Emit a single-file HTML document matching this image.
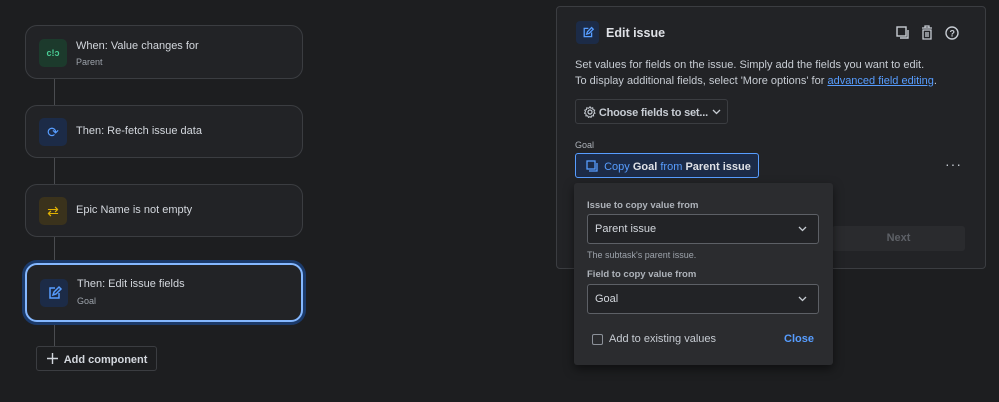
<!DOCTYPE html>
<html><head><style>
*{box-sizing:border-box;margin:0;padding:0}
body{width:999px;height:402px;background:#1d1e20;font-family:"Liberation Sans",sans-serif;color:#c7ccd3;position:relative;overflow:hidden;font-size:11px}
.a{position:absolute}
.card{position:absolute;left:25px;width:278px;background:#222326;border:1px solid #3b3d41;border-radius:12px}
.ic{position:absolute;left:13px;width:28px;height:28px;border-radius:5px}
.t{position:absolute;left:50px;font-size:11px;color:#d3d7dd}
.s{position:absolute;left:50px;font-size:9px;color:#9da3ab}
.line{position:absolute;left:54px;width:1px;background:#4a4c50}
.sel{position:absolute;left:13px;width:232px;height:30px;border:1px solid #5d6066;border-radius:3px;background:#222326;font-size:11px;color:#d3d7dd;padding:8px 7px}
.sel svg{position:absolute;right:11px;top:11px}
.lab{position:absolute;left:13px;font-size:9.5px;color:#aeb3ba;font-weight:bold}
</style></head><body>
<div class="line" style="top:79px;height:290px"></div>
<div class="card" style="top:25px;height:54px"><div class="ic" style="top:13px;background:#1c3a2c;color:#4bce97;font-size:9px;font-weight:bold;text-align:center;line-height:28px">c!ↄ</div><div class="t" style="top:14px">When: Value changes for</div><div class="s" style="top:31px">Parent</div></div>
<div class="card" style="top:105px;height:53px"><div class="ic" style="top:12px;background:#1c2b47;color:#579dff;font-size:14px;text-align:center;line-height:28px">⟳</div><div class="t" style="top:19px">Then: Re-fetch issue data</div></div>
<div class="card" style="top:184px;height:53px"><div class="ic" style="top:12px;background:#3a321c;color:#e2b203;font-size:14px;text-align:center;line-height:28px">⇄</div><div class="t" style="top:19px">Epic Name is not empty</div></div>
<div class="card" style="top:263px;height:59px;border:2px solid #85b8ff;box-shadow:0 0 0 3px #1b3a6a"><div class="ic" style="top:14px;background:#1c2b47"><svg width="28" height="28" viewBox="0 0 28 28"><path d="M15 9H10v10h9v-5M13 16l1-3 5-5 2 2-5 5z" fill="none" stroke="#579dff" stroke-width="1.5"/></svg></div><div class="t" style="top:13px">Then: Edit issue fields</div><div class="s" style="top:31px">Goal</div></div>
<div class="a" style="left:36px;top:346px;width:121px;height:25px;border:1px solid #3b3d41;border-radius:3px;background:#1d1e20;font-weight:bold;font-size:11px;color:#d3d7dd;padding:6px 0 0 10px"><svg width="11" height="11" style="vertical-align:-1px"><path d="M5.5 0v11M0 5.5h11" stroke="#d3d7dd" stroke-width="1.4"/></svg>&nbsp; Add component</div>

<div class="a" style="left:556px;top:6px;width:430px;height:263px;background:#222326;border:1px solid #3b3d41;border-radius:4px"></div>
<div class="a" style="left:576px;top:21px;width:23px;height:23px;border-radius:4px;background:#1c2b47"><svg width="23" height="23" viewBox="0 0 28 28"><path d="M15 9H10v10h9v-5M13 16l1-3 5-5 2 2-5 5z" fill="none" stroke="#579dff" stroke-width="1.6"/></svg></div>
<div class="a" style="left:606px;top:26px;font-size:12.5px;font-weight:bold;color:#dfe1e6">Edit issue</div>
<svg class="a" style="left:896px;top:25px" width="66" height="16"><rect x="1" y="2" width="9" height="9" fill="none" stroke="#c7ccd3" stroke-width="1.4"/><path d="M4 13h8V5" fill="none" stroke="#c7ccd3" stroke-width="1.4"/><path d="M26 3h10M29 3V1h4v2M27 5h8v9h-8z M30 7v5M32 7v5" fill="none" stroke="#c7ccd3" stroke-width="1.3"/><circle cx="56" cy="8" r="6" fill="none" stroke="#c7ccd3" stroke-width="1.4"/><text x="53.5" y="11.5" font-size="9" fill="#c7ccd3" font-weight="bold" font-family="Liberation Sans">?</text></svg>
<div class="a" style="left:575px;top:57px;font-size:11px;line-height:16px;color:#c7ccd3">Set values for fields on the issue. Simply add the fields you want to edit.<br>To display additional fields, select 'More options' for <span style="color:#579dff;text-decoration:underline">advanced field editing</span>.</div>
<div class="a" style="left:575px;top:99px;width:153px;height:25px;border:1px solid #3b3d41;border-radius:3px;font-size:11px;font-weight:bold;color:#c7ccd3;padding:6px 0 0 8px;white-space:nowrap;letter-spacing:-0.2px"><svg width="12" height="12" style="vertical-align:-2px" viewBox="0 0 12 12"><circle cx="6" cy="6" r="2" fill="none" stroke="#c7ccd3" stroke-width="1.2"/><path d="M6 .8l1 1.5 1.7-.5.3 1.8 1.7.6-.7 1.6 1 1.4-1.6.9.2 1.8-1.8-.1-.8 1.6L6 10.6l-1.5.8-.8-1.6-1.8.1.2-1.8-1.6-.9 1-1.4L.8 4.2l1.7-.6.3-1.8 1.7.5z" fill="none" stroke="#c7ccd3" stroke-width="1"/></svg> Choose fields to set...<svg width="9" height="6" style="margin-left:4px;vertical-align:1px"><path d="M1 1l3.5 3.5L8 1" fill="none" stroke="#c7ccd3" stroke-width="1.3"/></svg></div>
<div class="a" style="left:575px;top:140px;font-size:9px;color:#aeb3ba">Goal</div>
<div class="a" style="left:575px;top:153px;width:184px;height:25px;border:1px solid #579dff;border-radius:3px;background:#1c2b47;font-size:11px;padding:6px 0 0 10px;color:#579dff"><svg width="12" height="12" style="vertical-align:-2px"><rect x="1" y="1" width="8" height="8" fill="none" stroke="#579dff" stroke-width="1.3"/><path d="M3 11h8V3" fill="none" stroke="#579dff" stroke-width="1.3"/></svg>&nbsp; Copy <b style="color:#dfe1e6">Goal</b> from <b style="color:#dfe1e6">Parent issue</b></div>
<div class="a" style="left:945px;top:156px;font-size:14px;color:#c7ccd3;letter-spacing:1px">···</div>
<div class="a" style="left:832px;top:226px;width:133px;height:25px;background:#2a2b2e;border-radius:3px;font-size:11px;font-weight:bold;color:#5d6066;text-align:center;line-height:25px">Next</div>

<div class="a" style="left:574px;top:183px;width:259px;height:182px;background:#2b2c2f;border-radius:3px;box-shadow:0 4px 10px rgba(0,0,0,.5)">
<div class="lab" style="top:17px">Issue to copy value from</div>
<div class="sel" style="top:31px">Parent issue<svg width="9" height="6"><path d="M1 1l3.5 3.5L8 1" fill="none" stroke="#c7ccd3" stroke-width="1.3"/></svg></div>
<div class="a" style="left:13px;top:67px;font-size:9px;color:#9da3ab">The subtask's parent issue.</div>
<div class="lab" style="top:86px">Field to copy value from</div>
<div class="sel" style="top:101px">Goal<svg width="9" height="6"><path d="M1 1l3.5 3.5L8 1" fill="none" stroke="#c7ccd3" stroke-width="1.3"/></svg></div>
<div class="a" style="left:18px;top:151px;width:11px;height:11px;border:1.5px solid #8c9199;border-radius:2px"></div>
<div class="a" style="left:35px;top:150px;font-size:11px;color:#c7ccd3">Add to existing values</div>
<div class="a" style="left:210px;top:150px;font-size:11px;font-weight:bold;color:#579dff">Close</div>
</div>
</body></html>
